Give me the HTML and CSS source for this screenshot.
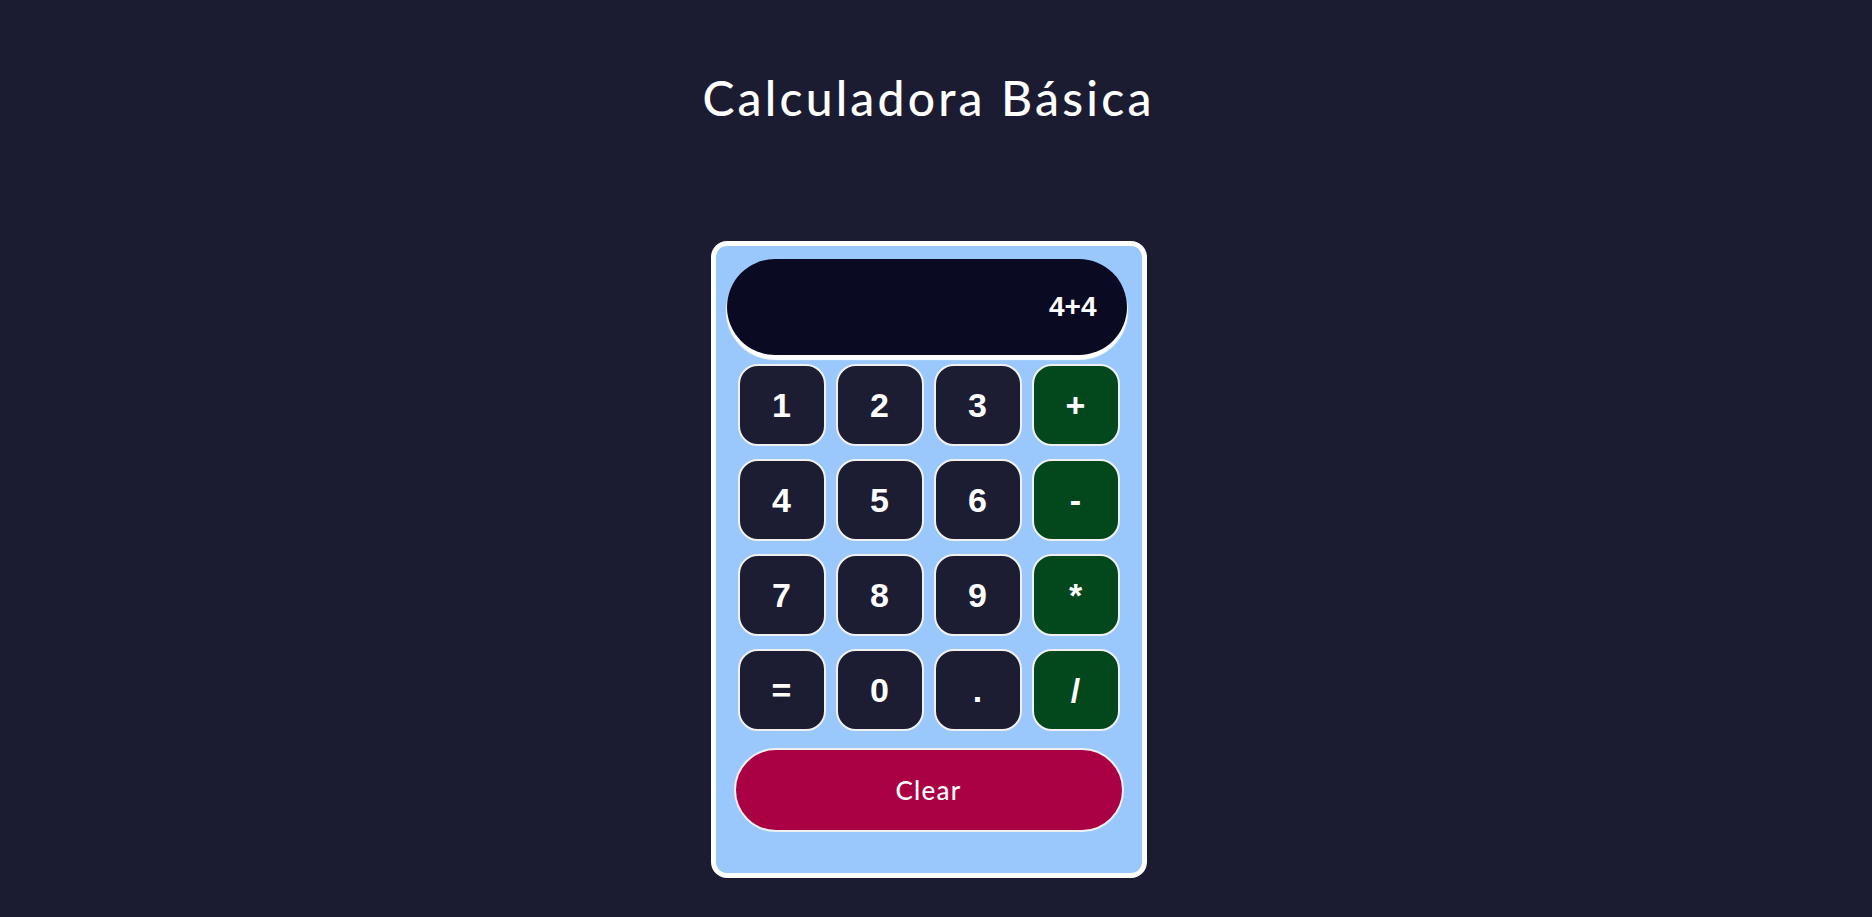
FILE: index.html
```html
<!DOCTYPE html>
<html lang="es">
<head>
<meta charset="utf-8">
<title>Calculadora Básica</title>
<link rel="stylesheet" href="styles.css">
</head>
<body>
<main class="page">
  <h1 class="title">Calculadora Básica</h1>
  <div class="calc">
    <div class="display">4+4</div>
    <div class="keys">
      <button class="key">1</button>
      <button class="key">2</button>
      <button class="key">3</button>
      <button class="key op">+</button>
      <button class="key">4</button>
      <button class="key">5</button>
      <button class="key">6</button>
      <button class="key op">-</button>
      <button class="key">7</button>
      <button class="key">8</button>
      <button class="key">9</button>
      <button class="key op">*</button>
      <button class="key">=</button>
      <button class="key">0</button>
      <button class="key">.</button>
      <button class="key op">/</button>
    </div>
    <button class="clear">Clear</button>
  </div>
</main>
</body>
</html>
```
FILE: styles.css
```css
html, body {
  margin: 0;
  padding: 0;
  background: #1b1b31;
  height: 100%;
}
.page {
  display: flex;
  flex-direction: column;
  align-items: center;
  padding-right: 15px;
  box-sizing: border-box;
  min-height: 100%;
}
.title {
  margin: 68px 0 0 0;
  font-family: "Lato", "Noto Sans", sans-serif;
  font-weight: 500;
  font-size: 48px;
  line-height: 60px;
  color: #ffffff;
  letter-spacing: 3.2px;
}
.calc {
  margin-top: 113px;
  width: 436px;
  height: 637px;
  box-sizing: border-box;
  border: 5px solid #ffffff;
  border-radius: 16px;
  background: #9ac8fd;
  display: flex;
  flex-direction: column;
  align-items: center;
  padding: 13px 0 0 0;
}
.display {
  width: 400px;
  height: 96px;
  box-sizing: border-box;
  border-radius: 48px;
  background: #0a0a22;
  box-shadow: 0 4px 1px 1px #ffffff;
  color: #ffffff;
  font-family: "Liberation Sans", Arial, sans-serif;
  font-size: 28px;
  font-weight: bold;
  display: flex;
  align-items: center;
  justify-content: flex-end;
  padding-right: 30px;
  margin-right: 4px;
}
.keys {
  margin-top: 9px;
  display: grid;
  grid-template-columns: repeat(4, 88px);
  grid-auto-rows: 82px;
  column-gap: 10px;
  row-gap: 13px;
}
.key {
  box-sizing: border-box;
  border: 2px solid #f0f0f0;
  border-radius: 20px;
  background: #1c1c32;
  color: #ffffff;
  font-family: "Liberation Sans", Arial, sans-serif;
  font-weight: bold;
  font-size: 34px;
  padding: 0;
  display: flex;
  align-items: center;
  justify-content: center;
}
.key.op {
  background: #03481d;
}
.clear {
  margin-top: 17px;
  width: 390px;
  height: 84px;
  box-sizing: border-box;
  border: 2px solid #f0f0f0;
  border-radius: 42px;
  background: #aa0044;
  color: #ffffff;
  font-family: "Lato", "Noto Sans", sans-serif;
  font-weight: 500;
  font-size: 26px;
  letter-spacing: 1.2px;
  padding: 0;
}
```
